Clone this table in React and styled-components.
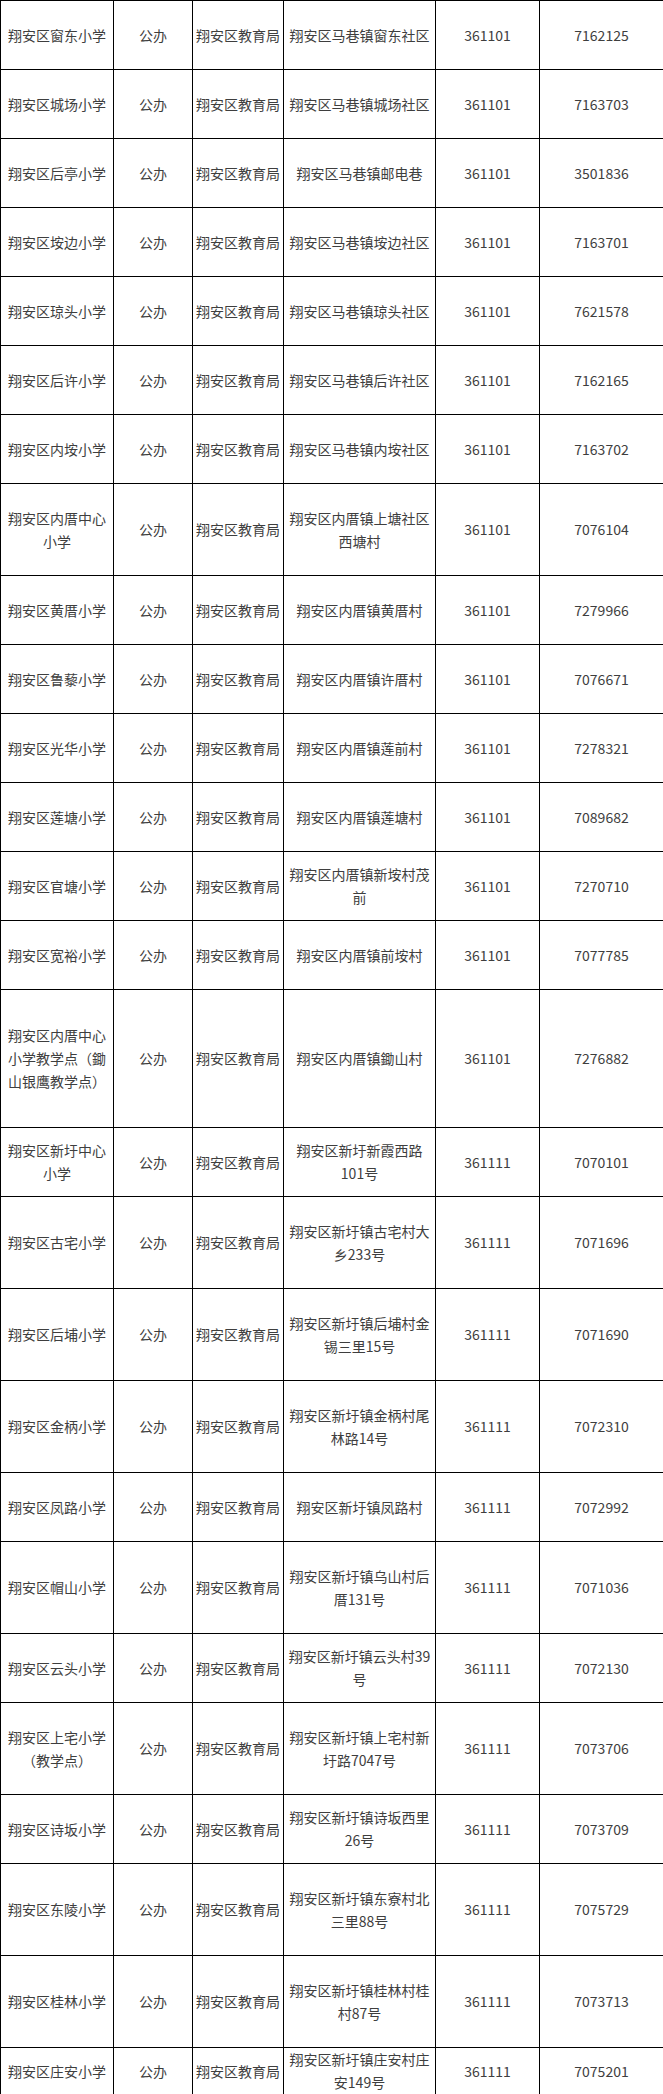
import React from 'react';
import styled, { createGlobalStyle } from 'styled-components';

const GlobalStyle = createGlobalStyle`
    html, body {
        margin: 0;
        padding: 0;
        background: #fff;
    }
    body {
        font-family: "Noto Sans CJK SC", "Noto Sans", sans-serif;
    }
`;

const Table = styled.table`
    width: 663px;
    border-collapse: collapse;
    table-layout: fixed;
    font-size: 14px;
    line-height: 23px;
    color: #3e3e3e;
`;

const Row = styled.tr`
    height: ${(p) => p.h}px;
`;

const Cell = styled.td`
    border: 1px solid #000;
    padding: 0 2px;
    text-align: center;
    vertical-align: middle;
    word-break: normal;
`;

const cols = [113, 79, 91, 152, 104, 124];

// [学校名称, 办别, 主管部门, 地址, 邮编, 电话, 行高]
const schools = [
    ['翔安区窗东小学', '翔安区马巷镇窗东社区', '361101', '7162125', 69],
    ['翔安区城场小学', '翔安区马巷镇城场社区', '361101', '7163703', 69],
    ['翔安区后亭小学', '翔安区马巷镇邮电巷', '361101', '3501836', 69],
    ['翔安区垵边小学', '翔安区马巷镇垵边社区', '361101', '7163701', 69],
    ['翔安区琼头小学', '翔安区马巷镇琼头社区', '361101', '7621578', 69],
    ['翔安区后许小学', '翔安区马巷镇后许社区', '361101', '7162165', 69],
    ['翔安区内垵小学', '翔安区马巷镇内垵社区', '361101', '7163702', 69],
    ['翔安区内厝中心小学', '翔安区内厝镇上塘社区西塘村', '361101', '7076104', 92],
    ['翔安区黄厝小学', '翔安区内厝镇黄厝村', '361101', '7279966', 69],
    ['翔安区鲁藜小学', '翔安区内厝镇许厝村', '361101', '7076671', 69],
    ['翔安区光华小学', '翔安区内厝镇莲前村', '361101', '7278321', 69],
    ['翔安区莲塘小学', '翔安区内厝镇莲塘村', '361101', '7089682', 69],
    ['翔安区官塘小学', '翔安区内厝镇新垵村茂前', '361101', '7270710', 69],
    ['翔安区宽裕小学', '翔安区内厝镇前垵村', '361101', '7077785', 69],
    ['翔安区内厝中心小学教学点（鋤山银鹰教学点）', '翔安区内厝镇鋤山村', '361101', '7276882', 138],
    ['翔安区新圩中心小学', '翔安区新圩新霞西路101号', '361111', '7070101', 69],
    ['翔安区古宅小学', '翔安区新圩镇古宅村大乡233号', '361111', '7071696', 92],
    ['翔安区后埔小学', '翔安区新圩镇后埔村金锡三里15号', '361111', '7071690', 92],
    ['翔安区金柄小学', '翔安区新圩镇金柄村尾林路14号', '361111', '7072310', 92],
    ['翔安区凤路小学', '翔安区新圩镇凤路村', '361111', '7072992', 69],
    ['翔安区帽山小学', '翔安区新圩镇乌山村后厝131号', '361111', '7071036', 92],
    ['翔安区云头小学', '翔安区新圩镇云头村39号', '361111', '7072130', 69],
    ['翔安区上宅小学（教学点）', '翔安区新圩镇上宅村新圩路7047号', '361111', '7073706', 92],
    ['翔安区诗坂小学', '翔安区新圩镇诗坂西里26号', '361111', '7073709', 69],
    ['翔安区东陵小学', '翔安区新圩镇东寮村北三里88号', '361111', '7075729', 92],
    ['翔安区桂林小学', '翔安区新圩镇桂林村桂村87号', '361111', '7073713', 92],
    ['翔安区庄安小学', '翔安区新圩镇庄安村庄安149号', '361111', '7075201', 46],
];

const App = () => {
    return (
        <>
            <GlobalStyle />
            <Table>
                <colgroup>
                    {cols.map((w, i) => (
                        <col key={i} style={{ width: w }} />
                    ))}
                </colgroup>
                <tbody>
                    {schools.map(([name, addr, zip, tel, h]) => (
                        <Row key={name} h={h}>
                            <Cell>{name}</Cell>
                            <Cell>公办</Cell>
                            <Cell>翔安区教育局</Cell>
                            <Cell>{addr}</Cell>
                            <Cell>{zip}</Cell>
                            <Cell>{tel}</Cell>
                        </Row>
                    ))}
                </tbody>
            </Table>
        </>
    );
};

export default App;
